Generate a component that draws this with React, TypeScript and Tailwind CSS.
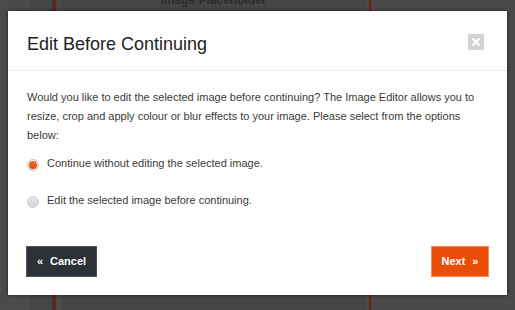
import React from "react";

const font = { fontFamily: '"Liberation Sans", Arial, sans-serif' };

function Radio({ checked }: { checked: boolean }) {
  return checked ? (
    <span className="mt-[3px] flex h-[12px] w-[12px] shrink-0 items-center justify-center rounded-full border border-[#c9c9c9] bg-gradient-to-b from-[#f4f4f4] to-[#dcdcdc]">
      <span className="h-[8px] w-[8px] rounded-full bg-gradient-to-b from-[#f26b2d] to-[#e04a0c]" />
    </span>
  ) : (
    <span className="mt-[3px] h-[12px] w-[12px] shrink-0 rounded-full border border-[#d2d2d2] bg-gradient-to-b from-[#e6e6e6] to-[#d4d4d4]" />
  );
}

export default function App() {
  return (
    <div className="relative h-[310px] w-[515px] overflow-hidden bg-[#4a4a4a]" style={font}>
      {/* backdrop page */}
      <div className="flex h-full">
        <div className="w-[30px] bg-[#4b4b4b]" />
        <div className="w-[22px] bg-[#464646]" />
        <div className="w-[2px] bg-[#383838]" />
        <div className="w-[2px] bg-[#6e1f18]" />
        <div className="w-[6px] bg-[#4a4a4a]" />
        <div className="flex w-[303px] justify-center bg-[#454545]">
          <span className="-mt-[6px] text-[12px] font-bold leading-[12px] text-[#2c2c2c]">Image Placeholder</span>
        </div>
        <div className="w-[4px] bg-[#4a4a4a]" />
        <div className="w-[2px] bg-[#6e1f18]" />
        <div className="flex-1 bg-[#4a4a4a]" />
      </div>

      {/* modal */}
      <div className="absolute left-[8px] top-[11px] flex h-[284px] w-[499px] flex-col bg-white shadow-[0_0_4px_rgba(0,0,0,0.6)]">
        <div className="flex h-[60px] items-start justify-between border-b border-dotted border-[#d8d8d8] pl-[19px] pr-[23px]">
          <h1 className="mt-[24px] text-[18px] font-normal leading-[18px] text-[#222]">Edit Before Continuing</h1>
          <button className="mt-[23px] flex h-[16px] w-[16px] items-center justify-center bg-[#d3d3d3]">
            <svg width="8" height="8" viewBox="0 0 8 8">
              <path d="M1 1L7 7M7 1L1 7" stroke="white" strokeWidth="2" strokeLinecap="square" />
            </svg>
          </button>
        </div>

        <div className="px-[19px] pt-[17px] text-[11px] leading-[19px] text-[#3a3a3a]">
          <p>
            Would you like to edit the selected image before continuing? The Image Editor allows you to
            <br />
            resize, crop and apply colour or blur effects to your image. Please select from the options
            <br />
            below:
          </p>
          <div className="mt-[9px] flex flex-col gap-[18px]">
            <label className="flex h-[19px] items-center gap-[8px]">
              <Radio checked />
              <span>Continue without editing the selected image.</span>
            </label>
            <label className="flex h-[19px] items-center gap-[8px]">
              <Radio checked={false} />
              <span>Edit the selected image before continuing.</span>
            </label>
          </div>
        </div>

        <div className="mt-auto flex items-center justify-between px-[18px] pb-[18px]">
          <button className="flex h-[31px] w-[71px] items-center justify-center gap-[7px] border border-[#50545a] bg-[#2e3136] text-[11px] font-bold text-white">
            <span>«</span>
            <span>Cancel</span>
          </button>
          <button className="flex h-[31px] w-[58px] items-center justify-center gap-[7px] border border-[#f38a5e] bg-[#ea4d08] text-[11px] font-bold text-white">
            <span>Next</span>
            <span>»</span>
          </button>
        </div>
      </div>
    </div>
  );
}
